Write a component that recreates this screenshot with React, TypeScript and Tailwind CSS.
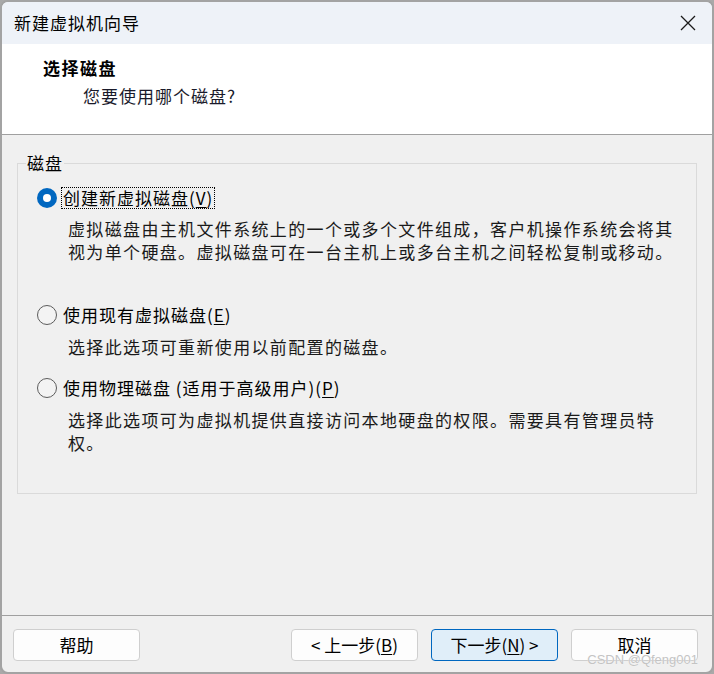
import React from "react";

function Radio({ checked }: { checked?: boolean }) {
  if (checked) {
    return (
      <div className="w-[20px] h-[20px] rounded-full bg-[#0067c0] flex items-center justify-center shrink-0">
        <div className="w-[8px] h-[8px] rounded-full bg-white"></div>
      </div>
    );
  }
  return <div className="w-[20px] h-[20px] rounded-full border border-[#5c5c5c] bg-[#f3f3f3] shrink-0"></div>;
}

function Btn({ children, primary }: { children: React.ReactNode; primary?: boolean }) {
  return (
    <button
      className={
        primary
          ? "w-[127px] h-[32px] rounded-[4px] border border-[#0067c0] bg-[#e0eef9] text-[17px] text-black flex items-center justify-center"
          : "w-[127px] h-[32px] rounded-[4px] border border-[#cfcfcf] bg-[#fdfdfd] text-[17px] text-black flex items-center justify-center"
      }
    >
      {children}
    </button>
  );
}

export default function App() {
  return (
    <div className="w-[714px] h-[674px] bg-[#a9a9a9] font-['Noto_Sans_CJK_SC','Noto_Sans',sans-serif] text-black">
      <div className="relative w-full h-full rounded-[8px] border-2 border-[#a3a3a3] bg-[#f0f0f0] overflow-hidden flex flex-col">
        {/* Title bar */}
        <div className="h-[42px] bg-[#eef2f8] flex items-center justify-between pl-[12px] pr-[16px]">
          <span className="text-[17px] leading-6 tracking-[1px]">新建虚拟机向导</span>
          <svg width="16" height="16" viewBox="0 0 16 16" className="text-[#1a1a1a]">
            <path d="M1 1 L15 15 M15 1 L1 15" stroke="currentColor" strokeWidth="1.3" fill="none" />
          </svg>
        </div>

        {/* Header */}
        <div className="h-[91px] bg-white border-b border-[#a0a0a0] pl-[41px] pt-[12px]">
          <div className="text-[17px] leading-6 font-bold tracking-[1.5px]">选择磁盘</div>
          <div className="mt-[4px] pl-[40px] text-[17px] leading-6 tracking-[1px] text-[#1a1a2a]">您要使用哪个磁盘?</div>
        </div>

        {/* Body */}
        <div className="flex-1 pt-[16px] px-[15px]">
          <fieldset className="h-[343px] border border-[#dadada] pl-[19px] pr-[19px]">
            <legend className="ml-[-11px] px-[1px] text-[17px] leading-6 tracking-[1px]">磁盘</legend>

            <div className="mt-[11px] flex items-center gap-[4px] h-[24px]">
              <Radio checked />
              <span className="border border-dotted border-black px-[1px] text-[17px] leading-[20px] tracking-[1px]">
                创建新虚拟磁盘(<span className="underline underline-offset-2">V</span>)
              </span>
            </div>
            <div className="mt-[7px] pl-[31px] text-[17px] leading-[23px] tracking-[1.35px] text-[#1a1a1a]">
              虚拟磁盘由主机文件系统上的一个或多个文件组成，客户机操作系统会将其
              <br />
              视为单个硬盘。虚拟磁盘可在一台主机上或多台主机之间轻松复制或移动。
            </div>

            <div className="mt-[40px] flex items-center gap-[6px] h-[24px]">
              <Radio />
              <span className="text-[17px] leading-6 tracking-[1px]">
                使用现有虚拟磁盘(<span className="underline underline-offset-2">E</span>)
              </span>
            </div>
            <div className="mt-[8px] pl-[31px] text-[17px] leading-[23px] tracking-[1.35px] text-[#1a1a1a]">
              选择此选项可重新使用以前配置的磁盘。
            </div>

            <div className="mt-[18px] flex items-center gap-[6px] h-[24px]">
              <Radio />
              <span className="text-[17px] leading-6 tracking-[1px]">
                使用物理磁盘 (适用于高级用户)(<span className="underline underline-offset-2">P</span>)
              </span>
            </div>
            <div className="mt-[8px] pl-[31px] text-[17px] leading-[23px] tracking-[1.35px] text-[#1a1a1a]">
              选择此选项可为虚拟机提供直接访问本地硬盘的权限。需要具有管理员特
              <br />
              权。
            </div>
          </fieldset>
        </div>

        {/* Footer */}
        <div className="border-t border-[#a0a0a0] pt-[13px] pb-[11px] pl-[11px] pr-[14px] flex items-center">
          <Btn>帮助</Btn>
          <div className="flex-1"></div>
          <div className="flex gap-[13px]">
            <Btn>
              &lt;&nbsp;上一步(<span className="underline underline-offset-2">B</span>)
            </Btn>
            <Btn primary>
              下一步(<span className="underline underline-offset-2">N</span>)&nbsp;&gt;
            </Btn>
            <Btn>取消</Btn>
          </div>
        </div>

        <div className="absolute right-[14px] bottom-[4px] text-[13px] leading-4 text-[#c4c4c4] font-['Liberation_Sans',sans-serif] [text-shadow:0_0_1px_white]">
          CSDN @Qfeng001
        </div>
      </div>
    </div>
  );
}
